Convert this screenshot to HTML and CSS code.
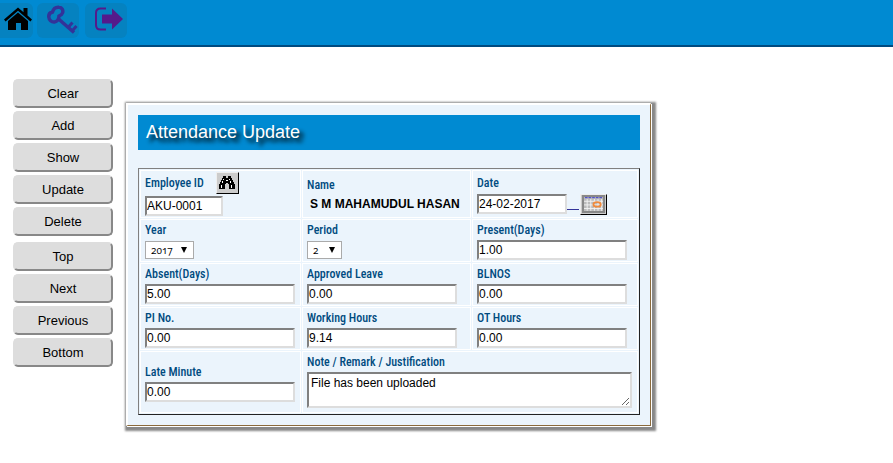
FILE: index.html
```html
<!DOCTYPE html>
<html lang="en">
<head>
<meta charset="utf-8">
<title>Attendance Update</title>
<link rel="stylesheet" href="styles.css">
</head>
<body>
<header class="topbar">
  <a class="tile home" href="#" aria-label="Home">
    <svg width="30" height="26" viewBox="0 0 30 26"><path d="M1 13.500 15 1.500l5.500 4.700V2h4v7.600l4.500 3.900-1.600 1.900L15 4.800 2.600 15.400z" fill="#000"/><path d="M15 6.500 25 15v9h-7v-7h-5v7H5v-9z" fill="#000"/></svg>
  </a>
  <a class="tile" href="#" aria-label="Change password">
    <svg width="32" height="30" viewBox="0 0 32 30" fill="none" stroke="#333399"><path d="M2.800 12C2.500 9 4.500 7.500 6.500 7 7.500 3.500 10 2 13 2.300c3 .2 4.500 3 3.500 5.700-.5 1.500-1.500 2-3.500 3-.2 3-1.500 5.500-4.500 6-3 .3-5.500-2-5.700-5z" stroke-width="3.500"/><path d="M12 13.500 28 27.500" stroke-width="3.500"/><path d="m22.500 22 4-4.500M26.500 25.500l4-4.500" stroke-width="3"/></svg>
  </a>
  <a class="tile exit" href="#" aria-label="Log out">
    <svg width="30" height="24" viewBox="0 0 30 24"><path d="M12 1.500H6.500Q2 1.500 2 6v12q0 4.500 4.500 4.500H12" fill="none" stroke="#551a8b" stroke-width="2"/><path d="M8 7.500h10V1.500L29 12 18 22.500v-6H8z" fill="#551a8b"/></svg>
  </a>
</header>
<main class="page">
  <nav class="actions" aria-label="Record actions">
    <div class="group">
      <button type="button">Clear</button>
      <button type="button">Add</button>
      <button type="button">Show</button>
      <button type="button">Update</button>
      <button type="button">Delete</button>
    </div>
    <div class="group">
      <button type="button">Top</button>
      <button type="button">Next</button>
      <button type="button">Previous</button>
      <button type="button">Bottom</button>
    </div>
  </nav>
  <form class="panel">
    <h1 class="title">Attendance Update</h1>
    <div class="fields">
      <div class="cell">
        <div class="line head">
          <label for="emp">Employee ID</label>
          <button class="find" type="button" aria-label="Find employee">
            <svg width="16" height="14" viewBox="0 0 16 14" shape-rendering="crispEdges"><path d="M4 0h3v2h2V0h3v2h1v2h1v2h1v2h1v5h-6V8H9V7H7v1H6v5H0V8h1V6h1V4h1V2h1z" fill="#000"/><path d="M4 3h1v1H4zM3 5h1v2H3zM2 9h1v3H2zM10 3h1v1h-1zM11 5h1v2h-1zM12 9h1v3h-1zM7 4h2v1H7z" fill="#fff"/></svg>
          </button>
        </div>
        <input id="emp" class="short" type="text" value="AKU-0001">
      </div>
      <div class="cell">
        <span class="label">Name</span>
        <output class="name">S M MAHAMUDUL HASAN</output>
      </div>
      <div class="cell">
        <label for="date">Date</label>
        <div class="line when">
          <input id="date" class="date" type="text" value="24-02-2017">
          <span class="rule"></span>
          <button class="calendar" type="button" aria-label="Choose date">
            <svg width="21" height="15" viewBox="0 0 21 15"><path fill="#bbb" d="M0 0h21v15H0z"/><path d="M0 4.500h21M0 8.500h21M0 12.500h21M3.500 2v13M7.500 2v13M11.500 2v13M15.500 2v13M19.500 2v13" stroke="#f4f4f4"/><path d="M1 .5h19" stroke="#3030d0" stroke-dasharray="3 1"/><ellipse cx="14.500" cy="8" rx="4" ry="2.500" fill="none" stroke="#f08a3c" stroke-width="2"/></svg>
          </button>
        </div>
      </div>
      <div class="cell">
        <label for="year">Year</label>
        <div class="pick year"><select id="year"><option>2017</option></select></div>
      </div>
      <div class="cell">
        <label for="period">Period</label>
        <div class="pick period"><select id="period"><option>2</option></select></div>
      </div>
      <div class="cell"><label for="present">Present(Days)</label><input id="present" type="text" value="1.00"></div>
      <div class="cell"><label for="absent">Absent(Days)</label><input id="absent" type="text" value="5.00"></div>
      <div class="cell"><label for="leave">Approved Leave</label><input id="leave" type="text" value="0.00"></div>
      <div class="cell"><label for="blnos">BLNOS</label><input id="blnos" type="text" value="0.00"></div>
      <div class="cell"><label for="pi">PI No.</label><input id="pi" type="text" value="0.00"></div>
      <div class="cell"><label for="hours">Working Hours</label><input id="hours" type="text" value="9.14"></div>
      <div class="cell"><label for="ot">OT Hours</label><input id="ot" type="text" value="0.00"></div>
      <div class="cell"><label for="late">Late Minute</label><input id="late" type="text" value="0.00"></div>
      <div class="cell wide"><label for="note">Note / Remark / Justification</label><textarea id="note">File has been uploaded</textarea></div>
    </div>
  </form>
</main>
</body>
</html>
```
FILE: styles.css
```css
* {
  box-sizing: border-box;
}

body {
  margin: 0;
  background: #fff;
  color: #000;
  font: 12px/18px "Liberation Sans", Arial, sans-serif;
}

.topbar {
  display: flex;
  gap: 6px;
  padding: 3px 0 7px;
  background: #008ad2;
  border-bottom: 2px solid #004b80;
}

.tile {
  display: flex;
  align-items: center;
  justify-content: center;
  width: 42px;
  height: 35px;
  padding: 0 0 2px 8px;
  border-radius: 6px;
  background: #0582c0;
}

.tile svg {
  display: block;
  flex: none;
}

.home {
  width: 33px;
  margin-right: -2px;
  padding: 0 0 4px 2px;
  border-radius: 0 6px 6px 0;
}

.exit {
  padding: 0 0 3px 6px;
}

.page {
  display: flex;
  align-items: flex-start;
  gap: 13px;
  padding: 32px 13px;
}

.actions,
.group {
  display: flex;
  flex-direction: column;
}

.actions {
  flex: none;
  gap: 6px;
  width: 100px;
}

.group {
  gap: 3px;
}

.group button {
  height: 29px;
  padding: 0;
  border: 2px solid;
  border-color: #ddd #888 #888 #ddd;
  border-radius: 5px;
  background: #ddd;
  color: #000;
  font: 13px "Liberation Sans", Arial, sans-serif;
}

.panel {
  flex: 0 1 525px;
  min-width: 0;
  margin-top: 24px;
  padding: 10px;
  border: 2px solid #fff;
  border-right: 1px solid #8a6a3c;
  border-bottom: 1px solid #8a6a3c;
  background: #ebf4fc;
  box-shadow: 1px 1px 0 #fff, 2px 2px 2px 3px #888;
}

.title {
  margin: 0 0 18px;
  padding: 0 8px;
  background: #008ad2;
  color: #fff;
  font-size: 18px;
  font-weight: 400;
  line-height: 35px;
  text-shadow: 4px 4px 4px #000;
}

.fields {
  display: grid;
  grid-template-columns: 161fr 169fr 166fr;
  gap: 1px;
  padding: 1px;
  border: 1px solid;
  border-color: #808080 #222 #222 #808080;
}

.cell {
  display: flex;
  flex-direction: column;
  align-items: flex-start;
  justify-content: center;
  min-width: 0;
  padding: 0 4px 1px;
  border: 1px solid #fff;
}

.wide {
  grid-column: span 2;
  padding-bottom: 4px;
}

label,
.label {
  color: #004b80;
  font: 500 12px/20px "Roboto Condensed", Roboto, sans-serif;
}

.line {
  display: flex;
  align-items: flex-start;
}

.head {
  align-items: center;
  gap: 12px;
  padding: 1px 0 2px;
}

.when {
  padding-top: 1px;
}

input,
textarea {
  width: 150px;
  max-width: 100%;
  height: 20px;
  margin: 0;
  padding: 0;
  border: 2px solid;
  border-color: #808080 #ddd #ddd #808080;
  background: #fff;
  color: #000;
  font: 12px "Liberation Sans", Arial, sans-serif;
}

.short {
  width: 78px;
}

.date {
  width: 90px;
}

.name {
  padding-left: 3px;
  font-weight: 700;
}

.rule {
  width: 12px;
  height: 16px;
  margin-right: 1px;
  border-bottom: 1px solid #333399;
}

.find,
.calendar {
  display: flex;
  align-items: center;
  justify-content: center;
  padding: 0;
  border: 1px solid;
  border-color: #eee #000 #000 #eee;
  background: #ccc;
}

.find {
  width: 23px;
  height: 22px;
}

.calendar {
  width: 27px;
  height: 21px;
}

.calendar svg {
  width: 19px;
  height: 14px;
  outline: 2px solid #888;
}

.pick {
  display: flex;
  position: relative;
  margin: 1px 0;
}

.pick select {
  width: 100%;
  height: 18px;
  padding: 0 5px;
  appearance: none;
  border: 1px solid #aaa;
  border-radius: 0;
  background: #fff;
  color: #000;
  font: 10px "Open Sans", "Noto Sans", sans-serif;
  font-variant-numeric: oldstyle-nums;
}

.pick::after {
  position: absolute;
  top: 6px;
  right: 7px;
  border: 3px solid transparent;
  border-top: 6px solid #000;
  border-bottom: 0;
  content: "";
  pointer-events: none;
}

.year {
  width: 49px;
}

.period {
  width: 35px;
}

textarea {
  display: block;
  width: 325px;
  height: 36px;
  padding: 2px;
  resize: both;
}
```
